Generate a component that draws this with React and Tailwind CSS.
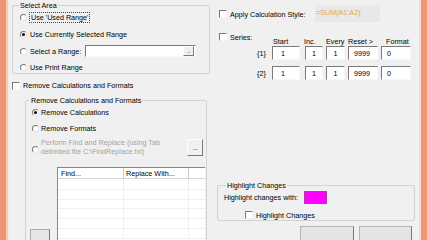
import React from "react";

const Check = ({ className = "" }) => (
  <span
    className={`block w-[8px] h-[8px] shrink-0 bg-white border border-t-[#7a7a7a] border-l-[#7a7a7a] border-r-[#f6f6f6] border-b-[#f6f6f6] ${className}`}
  />
);

const Radio = ({ checked = false, className = "" }) => (
  <span
    className={`flex items-center justify-center w-[7px] h-[7px] shrink-0 rounded-full bg-white border border-t-[#7a7a7a] border-l-[#7a7a7a] border-r-[#e6e6e6] border-b-[#e6e6e6] ${className}`}
  >
    {checked && <span className="block w-[3px] h-[3px] rounded-full bg-black" />}
  </span>
);

const Group = ({ label, className = "", labelLeft = "", children }) => (
  <div className={`relative border border-[#d3d3d3] rounded-[2px] ${className}`}>
    <span className={`absolute top-[-5px] bg-[#f0f0f0] px-[1px] leading-[9px] whitespace-nowrap ${labelLeft}`}>
      {label}
    </span>
    {children}
  </div>
);

const Box = ({ className = "", children }) => (
  <div
    className={`h-[14px] shrink-0 bg-white border border-t-[#7a7a7a] border-l-[#7a7a7a] border-r-[#f8f8f8] border-b-[#f8f8f8] flex items-center ${className}`}
  >
    {children}
  </div>
);

const Dots = ({ className = "" }) => (
  <div
    className={`shrink-0 flex items-center justify-center bg-[#f0f0f0] border border-t-[#ffffff] border-l-[#ffffff] border-r-[#7a7a7a] border-b-[#7a7a7a] text-[#333] ${className}`}
  >
    <span className="leading-[6px] tracking-[-0.5px]">...</span>
  </div>
);

export default function App() {
  return (
    <div className="w-[427px] h-[240px] overflow-hidden flex bg-[#f0f0f0] text-black font-['Liberation_Sans',Arial,sans-serif] text-[7.2px] leading-[9px]">
      <div className="w-[6px] shrink-0 bg-[#ee9571]" />
      <div className="w-[2px] shrink-0 bg-[#f7cdb8]" />
      <div className="w-[1px] shrink-0 bg-[#f3e7e0]" />

      <div className="flex-1 flex pl-[3px]">
        {/* Left column */}
        <div className="flex flex-col w-[198px] shrink-0">
          <Group label="Select Area" className="mt-[5px] h-[72px]" labelLeft="left-[6px]">
            <div className="flex flex-col pl-[7px] pr-[13px]">
              <div className="mt-[5px] h-[12px] flex items-center">
                <Radio />
                <span className="ml-[2px] h-[11px] flex items-center border border-dotted border-[#444] px-[1px] whitespace-nowrap">
                  Use 'Used Range'
                </span>
              </div>
              <div className="mt-[5px] h-[12px] flex items-center">
                <Radio checked />
                <span className="ml-[3px] whitespace-nowrap">Use Currently Selected Range</span>
              </div>
              <div className="mt-[5px] h-[12px] flex items-center">
                <Radio />
                <span className="ml-[3px] whitespace-nowrap">Select a Range:</span>
                <div className="ml-auto w-[111px] h-[12px] bg-white border border-t-[#7a7a7a] border-l-[#7a7a7a] border-r-[#f8f8f8] border-b-[#f8f8f8] flex items-center justify-end pr-[1px]">
                  <Dots className="w-[11px] h-[10px] text-[6px]" />
                </div>
              </div>
              <div className="mt-[4px] h-[12px] flex items-center">
                <Radio />
                <span className="ml-[3px] whitespace-nowrap">Use Print Range</span>
              </div>
            </div>
          </Group>

          <div className="mt-[7px] h-[10px] flex items-center">
            <Check />
            <span className="ml-[3px] whitespace-nowrap">Remove Calculations and Formats</span>
          </div>

          <Group
            label="Remove Calculations and Formats"
            className="ml-[13px] mt-[10px] w-[182px] h-[150px]"
            labelLeft="left-[4px]"
          >
            <div className="flex flex-col">
              <div className="mt-[5px] h-[12px] flex items-center pl-[6px]">
                <Radio checked />
                <span className="ml-[2px] whitespace-nowrap">Remove Calculations</span>
              </div>
              <div className="mt-[4px] h-[12px] flex items-center pl-[6px]">
                <Radio />
                <span className="ml-[2px] whitespace-nowrap">Remove Formats</span>
              </div>
              <div className="mt-[4px] h-[18px] flex items-start pl-[6px]">
                <Radio className="mt-[8px]" />
                <span className="ml-[2px] text-[#a3a3a3] whitespace-nowrap">
                  Perform Find and Replace (using Tab
                  <br />
                  delimited file C:\FindReplace.txt)
                </span>
                <Dots className="ml-auto mr-[3px] mt-[1px] w-[16px] h-[17px] text-[7px]" />
              </div>
              <div className="mt-[11px] flex items-start">
                <div className="ml-[4px] w-[20px] shrink-0">
                  <div className="mt-[62px] h-[14px] bg-[#e6e6e6] border border-[#adadad] border-r-[#7a7a7a]" />
                </div>
                <div className="ml-[7px] mr-[1px] flex-1 h-[80px] bg-white border-l border-t border-[#828790] flex flex-col">
                  <div className="h-[11px] flex border-b border-[#d5d5d5] shrink-0">
                    <div className="w-[66px] border-r border-[#c8c8c8] pl-[3px] flex items-center">Find...</div>
                    <div className="w-[65px] border-r border-[#c8c8c8] pl-[2px] flex items-center whitespace-nowrap">
                      Replace With...
                    </div>
                    <div className="flex-1" />
                  </div>
                  <div className="h-[11px] flex border-b border-[#f0f0f0] shrink-0">
                    <div className="w-[66px] border-r border-[#f0f0f0]" />
                    <div className="w-[65px] border-r border-[#f0f0f0]" />
                  </div>
                  <div className="h-[10px] flex border-b border-[#f0f0f0] shrink-0">
                    <div className="w-[66px] border-r border-[#f0f0f0]" />
                    <div className="w-[65px] border-r border-[#f0f0f0]" />
                  </div>
                  <div className="h-[9px] flex border-b border-[#f0f0f0] shrink-0">
                    <div className="w-[66px] border-r border-[#f0f0f0]" />
                    <div className="w-[65px] border-r border-[#f0f0f0]" />
                  </div>
                  <div className="h-[10px] flex border-b border-[#f0f0f0] shrink-0">
                    <div className="w-[66px] border-r border-[#f0f0f0]" />
                    <div className="w-[65px] border-r border-[#f0f0f0]" />
                  </div>
                  <div className="h-[10px] flex border-b border-[#f0f0f0] shrink-0">
                    <div className="w-[66px] border-r border-[#f0f0f0]" />
                    <div className="w-[65px] border-r border-[#f0f0f0]" />
                  </div>
                  <div className="h-[10px] flex border-b border-[#f0f0f0] shrink-0">
                    <div className="w-[66px] border-r border-[#f0f0f0]" />
                    <div className="w-[65px] border-r border-[#f0f0f0]" />
                  </div>
                </div>
              </div>
            </div>
          </Group>
        </div>

        {/* Right column */}
        <div className="flex flex-col w-[198px] ml-[7px] shrink-0">
          <div className="mt-[5px] h-[17px] flex items-start">
            <div className="w-[98px] h-[17px] pt-[1px] pl-[2px] flex items-center">
              <Check />
              <span className="ml-[3px] whitespace-nowrap">Apply Calculation Style:</span>
            </div>
            <div className="w-[65px] h-[17px] bg-[#e8e8e8] pt-[3px] pl-[1px] text-[#eea33c] whitespace-nowrap">
              =SUM(A1:A2)
            </div>
          </div>

          <div className="mt-[10px] flex items-start">
            <div className="w-[40px] h-[10px] pl-[2px] flex items-center shrink-0">
              <Check />
              <span className="ml-[3px] whitespace-nowrap">Series:</span>
            </div>
            <div className="mt-[5px] flex flex-col">
              <div className="h-[9px] flex items-center whitespace-nowrap">
                <div className="w-[15px] shrink-0" />
                <div className="w-[28px] pl-[1px] shrink-0">Start</div>
                <div className="ml-[4px] w-[19px] shrink-0">Inc.</div>
                <div className="ml-[3px] w-[19px] shrink-0">Every</div>
                <div className="ml-[3px] w-[30px] shrink-0">Reset &gt;</div>
                <div className="ml-[3px] w-[30px] pl-[5px] shrink-0">Format</div>
              </div>
              <div className="h-[14px] flex items-center">
                <div className="w-[15px] shrink-0">{"{1}"}</div>
                <Box className="w-[28px] pl-[8px]">1</Box>
                <Box className="ml-[5px] w-[18px] justify-center">1</Box>
                <Box className="ml-[3px] w-[19px] justify-center">1</Box>
                <Box className="ml-[3px] w-[30px] justify-end pr-[7px]">9999</Box>
                <Box className="ml-[3px] w-[30px] pl-[5px]">0</Box>
              </div>
              <div className="mt-[6px] h-[14px] flex items-center">
                <div className="w-[15px] shrink-0">{"{2}"}</div>
                <Box className="w-[28px] pl-[8px]">1</Box>
                <Box className="ml-[5px] w-[18px] justify-center">1</Box>
                <Box className="ml-[3px] w-[19px] justify-center">1</Box>
                <Box className="ml-[3px] w-[30px] justify-end pr-[7px]">9999</Box>
                <Box className="ml-[3px] w-[30px] pl-[5px]">0</Box>
              </div>
            </div>
          </div>

          <Group label="Highlight Changes" className="mt-[105px] h-[43px]" labelLeft="left-[8px]">
            <div className="mt-[5px] h-[13px] flex items-center pl-[6px]">
              <span className="w-[80px] whitespace-nowrap">Highlight changes with:</span>
              <div className="w-[23px] h-[13px] bg-[#ff00ff] border border-[#b23ab2]" />
            </div>
            <div className="mt-[6px] h-[10px] flex items-center pl-[27px]">
              <Check />
              <span className="ml-[3px] whitespace-nowrap">Highlight Changes</span>
            </div>
          </Group>

          <div className="mt-[5px] flex justify-end pr-[3px]">
            <div className="w-[54px] h-[22px] bg-[#e4e4e4] border border-[#b5b5b5] border-r-[#7a7a7a]" />
            <div className="ml-[5px] w-[53px] h-[22px] bg-[#e4e4e4] border border-[#b5b5b5] border-r-[#7a7a7a]" />
          </div>
        </div>
      </div>

      <div className="w-[2px] shrink-0 bg-[#f6dccb]" />
      <div className="w-[6px] shrink-0 bg-[#ee9571]" />
    </div>
  );
}
